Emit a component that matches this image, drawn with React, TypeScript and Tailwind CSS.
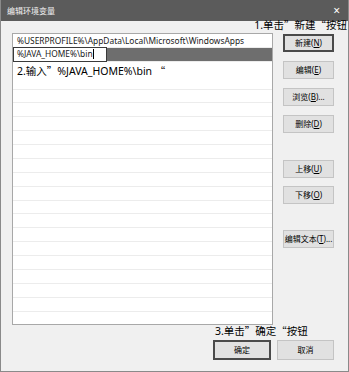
import React from "react";

const cjk = { fontFamily: '"Noto Sans", "Noto Sans CJK SC", sans-serif' };
const cjkOnly = { fontFamily: '"Noto Sans CJK SC", sans-serif' };

function Btn({ label, u, suffix = "", focused = false, className = "" }: { label: string; u?: string; suffix?: string; focused?: boolean; className?: string }) {
  return (
    <div
      className={`flex items-center justify-center h-[18px] bg-[#e1e1e1] text-[8px] text-black leading-none ${
        focused ? "border-2 border-[#4a4a4a]" : "border border-[#c4c4c4]"
      } ${className}`}
      style={cjk}
    >
      <span>
        {label}
        {u && (
          <>
            (<span className="underline">{u}</span>)
          </>
        )}
        {suffix}
      </span>
    </div>
  );
}

function Q({ c }: { c: string }) {
  return <span style={cjkOnly}>{c}</span>;
}

export default function App() {
  const rows = Array.from({ length: 21 });
  return (
    <div className="relative w-[349px] h-[372px] bg-[#f0f0f0] border-x border-b border-[#8a8a8a] flex flex-col overflow-hidden" style={cjk}>
      {/* title bar */}
      <div className="h-[21px] bg-[#5b5b5b] flex items-center justify-between pl-[6px] pr-[8px] shrink-0">
        <span className="text-[8px] text-[#f2f2f2]">编辑环境变量</span>
        <span className="text-[12px] text-white leading-none">×</span>
      </div>

      {/* body */}
      <div className="flex flex-1 pl-[11px] pt-[12px] pr-[14px]">
        {/* list */}
        <div className="relative w-[261px] h-[292px] bg-white border border-[#a8a8a8] flex flex-col">
          {rows.map((_, i) => (
            <div
              key={i}
              className={`relative h-[13.875px] shrink-0 ${i < 20 && i !== 2 ? "border-b border-[#ececec]" : ""} ${
                i === 1 ? "bg-[#6e6e6e]" : ""
              }`}
            >
              {i === 0 && (
                <span className="absolute left-[4px] top-[0px] text-[8.4px] leading-[14px] text-[#1a1a1a] whitespace-nowrap">
                  %USERPROFILE%\AppData\Local\Microsoft\WindowsApps
                </span>
              )}
              {i === 1 && (
                <div className="absolute left-0 top-[-1px] w-[94px] h-[15px] bg-white border border-[#3a3a3a] flex items-center pl-[3px]">
                  <span className="text-[8.4px] text-[#1a1a1a] whitespace-nowrap leading-none">%JAVA_HOME%\bin</span>
                  <span className="w-px h-[10px] bg-black" />
                </div>
              )}
            </div>
          ))}
          {/* annotation 2 */}
          <span className="absolute left-[4px] top-[32px] text-[10.5px] leading-none text-black whitespace-nowrap">
            2.输入<Q c="”" />%JAVA_HOME%\bin <Q c="“" />
          </span>
        </div>

        {/* buttons column */}
        <div className="flex flex-col ml-[10px] w-[51px] pt-[1px]">
          <Btn label="新建" u="N" focused />
          <Btn label="编辑" u="E" className="mt-[9px]" />
          <Btn label="浏览" u="B" suffix="..." className="mt-[9px]" />
          <Btn label="删除" u="D" className="mt-[9px]" />
          <Btn label="上移" u="U" className="mt-[27px]" />
          <Btn label="下移" u="O" className="mt-[8px]" />
          <Btn label="编辑文本" u="T" suffix="..." className="mt-[26px]" />
        </div>
      </div>

      {/* footer */}
      <div className="flex justify-end gap-[6px] pr-[14px] pb-[11px]">
        <Btn label="确定" focused className="w-[58px] h-[20px]" />
        <Btn label="取消" className="w-[57px] h-[20px]" />
      </div>

      {/* annotations */}
      <span className="absolute right-[1px] top-[20px] text-[10.5px] leading-none text-black whitespace-nowrap">
        1.单击<Q c="”" />新建<Q c="“" />按钮
      </span>
      <span className="absolute left-[214px] top-[326px] text-[10.5px] leading-none text-black whitespace-nowrap">
        3.单击<Q c="”" />确定<Q c="“" />按钮
      </span>
    </div>
  );
}
